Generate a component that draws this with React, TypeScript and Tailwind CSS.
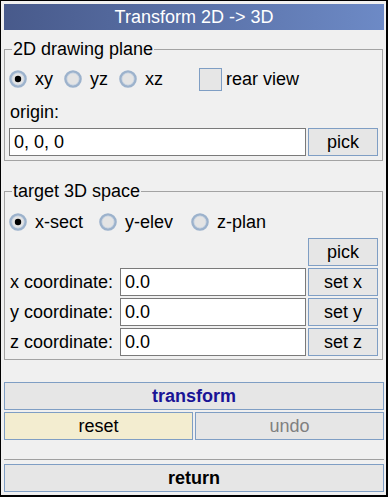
import React from "react";

function Radio({ checked }: { checked?: boolean }) {
  return (
    <svg width="18" height="18" viewBox="0 0 18 18" className="shrink-0">
      <circle cx="9" cy="9" r="7.5" fill="#e4e4e4" stroke="#9cb2cc" strokeWidth="2.6" />
      <circle cx="9" cy="9" r="6" fill="none" stroke="#c7d3e2" strokeWidth="0.8" />
      {checked && <circle cx="9" cy="9" r="3.2" fill="#000" />}
    </svg>
  );
}

function RadioItem({ label, checked, w }: { label: string; checked?: boolean; w: string }) {
  return (
    <div className={`flex items-center gap-[8px] ${w}`}>
      <Radio checked={checked} />
      <span>{label}</span>
    </div>
  );
}

function Btn({ children, className = "" }: { children: React.ReactNode; className?: string }) {
  return (
    <div
      className={`flex h-[28px] items-center justify-center border border-[#7f9ec4] bg-[#e6e6e6] ${className}`}
    >
      {children}
    </div>
  );
}

function Input({ value, className = "" }: { value: string; className?: string }) {
  return (
    <div
      className={`flex h-[28px] items-center border border-[#7a7a7a] bg-white pl-[4px] ${className}`}
    >
      {value}
    </div>
  );
}

export default function App() {
  return (
    <div className="flex h-[497px] w-[388px] flex-col border-t border-l border-r-2 border-b-2 border-black bg-[#f0f0f0] pt-[3px] pl-[3px] pr-[2px] pb-[3px] font-['Liberation_Sans',Arial,sans-serif] text-[18px] leading-[20px] text-black">
      <div className="flex h-[26px] shrink-0 items-center justify-center bg-gradient-to-r from-[#485a8b] to-[#6d8ac6] text-white">
        Transform 2D -&gt; 3D
      </div>

      <fieldset className="mt-[9px] mr-[1px] border border-[#a3a3a3] pl-[4px] pr-[4px] pb-[4px]">
        <legend className="ml-[3px] px-[1px] leading-[20px]">2D drawing plane</legend>
        <div className="mt-[8px] flex h-[24px] items-center">
          <RadioItem label="xy" checked w="w-[55px]" />
          <RadioItem label="yz" w="w-[55px]" />
          <RadioItem label="xz" w="w-[80px]" />
          <div className="flex items-center gap-[4px]">
            <div className="h-[23px] w-[23px] border border-[#7f9ec4] bg-[#e6e6e6]" />
            <span>rear view</span>
          </div>
        </div>
        <div className="mt-[11px] h-[20px] pl-[1px]">origin:</div>
        <div className="mt-[6px] flex gap-[2px]">
          <Input value="0, 0, 0" className="w-[297px]" />
          <Btn className="w-[70px]">pick</Btn>
        </div>
      </fieldset>

      <fieldset className="mt-[20px] mr-[1px] border border-[#a3a3a3] pl-[4px] pr-[4px] pb-[3px]">
        <legend className="ml-[3px] px-[1px] leading-[20px]">target 3D space</legend>
        <div className="mt-[9px] flex h-[24px] items-center">
          <RadioItem label="x-sect" checked w="w-[90px]" />
          <RadioItem label="y-elev" w="w-[92px]" />
          <RadioItem label="z-plan" w="w-[90px]" />
        </div>
        <div className="mt-[4px] flex justify-end">
          <Btn className="w-[70px]">pick</Btn>
        </div>
        {[
          ["x coordinate:", "set x"],
          ["y coordinate:", "set y"],
          ["z coordinate:", "set z"],
        ].map(([l, b]) => (
          <div key={l} className="mt-[2px] flex items-center">
            <div className="w-[111px] pl-[1px]">{l}</div>
            <Input value="0.0" className="w-[186px]" />
            <Btn className="ml-[2px] w-[70px]">{b}</Btn>
          </div>
        ))}
      </fieldset>

      <Btn className="mt-[22px] shrink-0 font-bold text-[#1a1496]">transform</Btn>
      <div className="mt-[2px] grid shrink-0 grid-cols-2 gap-[2px]">
        <Btn className="bg-[#f3edd0]">reset</Btn>
        <Btn className="bg-[#dfc1c1] text-[#808080]">undo</Btn>
      </div>
      <div className="mt-[19px] h-px shrink-0 bg-[#a0a0a0]" />
      <Btn className="mt-[4px] shrink-0 bg-[#c9d1df] font-bold">return</Btn>
    </div>
  );
}
